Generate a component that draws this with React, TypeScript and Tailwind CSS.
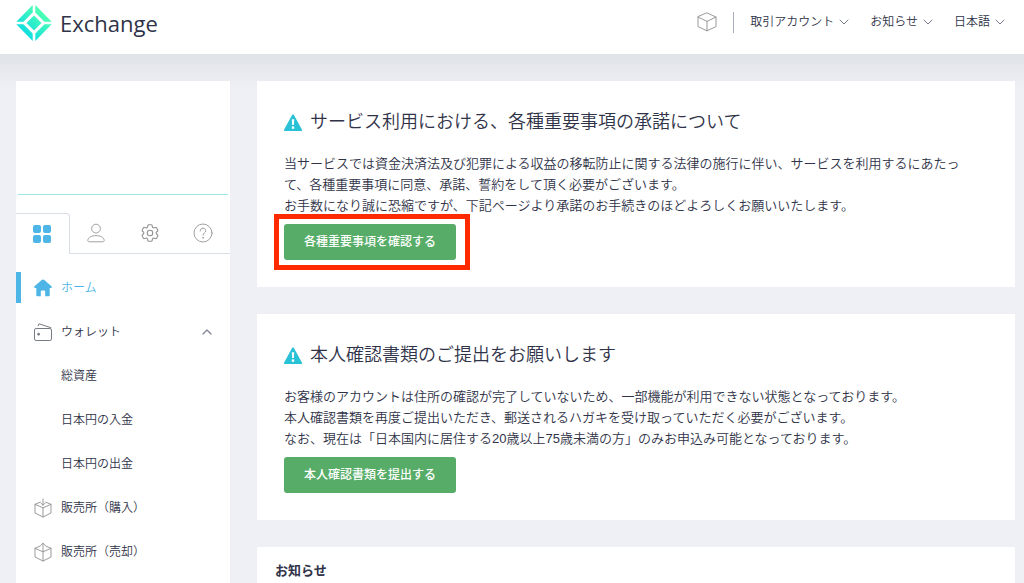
import { useState } from 'react';
import type { ReactNode } from 'react';
import { ChevronDown, ChevronUp } from 'lucide-react';
import { HiOutlineCog6Tooth } from 'react-icons/hi2';

function Logo() {
  return (
    <svg viewBox="48 15 108 110" className="w-9 h-9" aria-hidden="true">
      <defs>
        <linearGradient id="logo-fill" gradientUnits="userSpaceOnUse" x1="75" y1="100" x2="129" y2="42">
          <stop offset="0" stopColor="#12dfdf" />
          <stop offset="1" stopColor="#4cffb4" />
        </linearGradient>
      </defs>
      <g fill="url(#logo-fill)">
        <path d="M98 15V38L70 66H48Z" />
        <path d="M106 15V38L134 66H156Z" />
        <path d="M98 125V102L70 74H48Z" />
        <path d="M106 125V102L134 74H156Z" />
        <path d="M102 47L125 70L102 93L79 70Z" />
      </g>
    </svg>
  );
}

function BoxIcon({ arrow }: { arrow?: 'in' | 'out' }) {
  return (
    <svg viewBox="0 0 20 20" className="w-5 h-5 shrink-0" fill="none" stroke="#8f8f8f" strokeWidth="0.9" strokeLinejoin="round" strokeLinecap="round" aria-hidden="true">
      {arrow === 'in' && <path d="M7.2 4.2L2 6.3V15L10 19L18 15V6.3L12.8 4.2M2 6.3L10 9.8L18 6.3M10 9.8V19M10 1V7.2M7.8 5L10 7.2L12.2 5" />}
      {arrow === 'out' && <path d="M7.2 4L2 6.3V15L10 19L18 15V6.3L12.8 4M2 6.3L10 9.8L18 6.3M10 19V1.2M7.8 3.4L10 1.2L12.2 3.4" />}
      {!arrow && <path d="M10 1L19 5V14.6L10 18.8L1 14.6V5ZM1 5L10 9.4L19 5M10 9.4V18.8" />}
    </svg>
  );
}

function GridIcon() {
  return (
    <svg viewBox="0 0 18 18" className="w-[18px] h-[18px]" fill="#4db6e6" aria-hidden="true">
      <rect width="8" height="8" rx="2" />
      <rect x="10" width="8" height="8" rx="2" />
      <rect y="10" width="8" height="8" rx="2" />
      <rect x="10" y="10" width="8" height="8" rx="2" />
    </svg>
  );
}

function UserIcon() {
  return (
    <svg viewBox="0 0 18 20" className="w-[18px] h-5" fill="none" stroke="#a0a0a0" aria-hidden="true">
      <circle cx="9" cy="5.6" r="4.4" />
      <path d="M2.4 18.8C1.2 18.8 0.7 18.2 0.8 17.2C1.2 14.2 4.8 12.6 9 12.6S16.8 14.2 17.2 17.2C17.3 18.2 16.8 18.8 15.6 18.8Z" />
    </svg>
  );
}

function HelpIcon() {
  return (
    <svg viewBox="0 0 20 20" className="w-5 h-5" fill="none" stroke="#a0a0a0" strokeLinecap="round" aria-hidden="true">
      <circle cx="10" cy="10" r="9" />
      <path d="M7.2 8C7.2 6.2 8.4 5.2 10 5.2S12.8 6.2 12.8 7.8C12.8 9.8 10 9.9 10 12.2" />
      <circle cx="10" cy="14.8" r="0.4" fill="#a0a0a0" />
    </svg>
  );
}

function HomeIcon() {
  return (
    <svg viewBox="0 0 18 18" className="w-[18px] h-[18px]" fill="#4db6e6" aria-hidden="true">
      <path d="M8 0.8Q9 0 10 0.8L17.5 7.2Q18.4 8.8 16.8 9H15.7V16.2Q15.7 17.2 14.7 17.2H11.2V12.4Q11.2 11.4 10.2 11.4H7.8Q6.8 11.4 6.8 12.4V17.2H3.3Q2.3 17.2 2.3 16.2V9H1.2Q-0.4 8.8 0.5 7.2Z" />
    </svg>
  );
}

function WalletIcon() {
  return (
    <svg viewBox="0 0 19 20" className="w-[19px] h-5" fill="none" stroke="#777b82" aria-hidden="true">
      <rect x="0.5" y="6.5" width="17" height="12" rx="1.6" />
      <path d="M4 4.2L5 1.8L17.2 5.8" />
      <circle cx="4.6" cy="12.2" r="1" fill="#777b82" />
    </svg>
  );
}

function WarningIcon() {
  return (
    <svg viewBox="0 0 18 18" className="w-[18px] h-[18px] shrink-0" aria-hidden="true">
      <path d="M8.2 0.8Q9 0 9.8 0.8L18 15.8Q18.2 17 17 17H1Q-0.2 17 0 15.8Z" fill="#28c1d6" />
      <path d="M7.8 5.2H10.2L9.9 11H8.1Z" fill="#fff" />
      <rect x="7.8" y="12.4" width="2.4" height="2.4" fill="#fff" />
    </svg>
  );
}

const headerMenus = ['取引アカウント', 'お知らせ', '日本語'];

const tabs = [
  { id: 'menu', label: 'メニュー', icon: <GridIcon /> },
  { id: 'user', label: 'ユーザー', icon: <UserIcon /> },
  { id: 'settings', label: '設定', icon: <HiOutlineCog6Tooth className="w-[22px] h-[22px] text-[#929292]" strokeWidth={1.2} /> },
  { id: 'help', label: 'ヘルプ', icon: <HelpIcon /> },
];

const walletItems = ['総資産', '日本円の入金', '日本円の出金'];

interface NoticeCardProps {
  title: string;
  lines: string[];
  action: string;
  highlighted?: boolean;
}

function NoticeCard({ title, lines, action, highlighted }: NoticeCardProps) {
  return (
    <section className="bg-white px-[27px] pt-7 pb-[27px]">
      <h2 className="flex items-center gap-2 text-lg leading-[27px]">
        <WarningIcon />
        {title}
      </h2>
      <p className="mt-[17px] text-[13px] leading-[21px]">
        {lines.map((line) => (
          <span key={line} className="block">{line}</span>
        ))}
      </p>
      <div className="relative mt-2 w-fit">
        <button className="block h-9 px-5 rounded-[3px] bg-[#57ad68] text-white text-xs font-medium">
          {action}
        </button>
        {highlighted && (
          <div className="absolute -inset-y-2.5 -left-2.5 -right-3.5 border-[5px] border-[#ff2a00] pointer-events-none" />
        )}
      </div>
    </section>
  );
}

function SideLink({ icon, children }: { icon?: ReactNode; children: ReactNode }) {
  return (
    <a href="#" className="flex items-center h-[31px] pl-[17px]">
      <span className="w-7 flex">{icon}</span>
      {children}
    </a>
  );
}

function Sidebar() {
  const [activeTab, setActiveTab] = useState('menu');
  const [walletOpen, setWalletOpen] = useState(true);

  return (
    <aside className="w-[214px] shrink-0 bg-white">
      {/* Account summary */}
      <div className="h-[114px] mx-0.5 border-b border-[#9fe6e6]" />

      <div className="mt-[18px] grid grid-cols-4">
        {tabs.map((tab) => (
          <button
            key={tab.id}
            aria-label={tab.label}
            onClick={() => setActiveTab(tab.id)}
            className={`h-[41px] flex items-center justify-center border-[#d9dde6] ${
              activeTab === tab.id ? 'border-t border-r rounded-tr-[4px]' : 'border-b'
            }`}
          >
            {tab.icon}
          </button>
        ))}
      </div>

      <nav className="mt-[18px] flex flex-col gap-[13px] text-xs">
        <a href="#" className="flex items-center h-[31px] pl-[13px] border-l-[5px] border-[#4db6e6] text-[#4db6e6]">
          <span className="w-[27px] flex"><HomeIcon /></span>
          ホーム
        </a>
        <button
          onClick={() => setWalletOpen(!walletOpen)}
          aria-expanded={walletOpen}
          className="flex items-center h-[31px] pl-[18px] pr-[15px]"
        >
          <span className="w-[27px] flex"><WalletIcon /></span>
          ウォレット
          <ChevronUp className={`ml-auto w-4 h-4 text-[#858997] ${walletOpen ? '' : 'rotate-180'}`} />
        </button>
        {walletOpen && walletItems.map((item) => <SideLink key={item}>{item}</SideLink>)}
        <SideLink icon={<BoxIcon arrow="in" />}>販売所（購入）</SideLink>
        <SideLink icon={<BoxIcon arrow="out" />}>販売所（売却）</SideLink>
      </nav>
    </aside>
  );
}

export default function App() {
  return (
    <div className="min-h-screen flex flex-col bg-[#eff0f6] text-[#303348] font-[350] font-['Liberation_Sans','Noto_Sans_CJK_JP',sans-serif]">
      <header className="h-[54px] pb-2.5 px-4 flex items-center justify-between bg-white">
        <a href="#" className="flex items-center gap-2 mt-0.5">
          <Logo />
          <span className="font-['Open_Sans',sans-serif] font-normal text-[22px] leading-7">Exchange</span>
        </a>
        <div className="flex items-center">
          <BoxIcon />
          <div className="w-px h-[21px] mx-4 bg-[#a9acba]" />
          <div className="flex gap-[18px]">
            {headerMenus.map((label) => (
              <button key={label} aria-haspopup="menu" className="flex items-center gap-0.5 text-xs leading-5">
                {label}
                <ChevronDown className="w-4 h-4 text-[#757988]" strokeWidth={1.5} />
              </button>
            ))}
          </div>
        </div>
      </header>

      <div className="flex-1 flex gap-[27px] pt-[27px] pl-4 pr-[9px] bg-[linear-gradient(to_bottom,#dfe3e8,#eff0f6_36px)]">
        <Sidebar />

        <main className="flex-1 min-w-0 flex flex-col gap-[27px]">
          <NoticeCard
            title="サービス利用における、各種重要事項の承諾について"
            lines={[
              '当サービスでは資金決済法及び犯罪による収益の移転防止に関する法律の施行に伴い、サービスを利用するにあたっ',
              'て、各種重要事項に同意、承諾、誓約をして頂く必要がございます。',
              'お手数になり誠に恐縮ですが、下記ページより承諾のお手続きのほどよろしくお願いいたします。',
            ]}
            action="各種重要事項を確認する"
            highlighted
          />
          <NoticeCard
            title="本人確認書類のご提出をお願いします"
            lines={[
              'お客様のアカウントは住所の確認が完了していないため、一部機能が利用できない状態となっております。',
              '本人確認書類を再度ご提出いただき、郵送されるハガキを受け取っていただく必要がございます。',
              'なお、現在は「日本国内に居住する20歳以上75歳未満の方」のみお申込み可能となっております。',
            ]}
            action="本人確認書類を提出する"
          />
          <section className="flex-1 bg-white px-[18px] pt-3.5">
            <h2 className="text-[13px] leading-5 font-bold">お知らせ</h2>
          </section>
        </main>
      </div>
    </div>
  );
}
